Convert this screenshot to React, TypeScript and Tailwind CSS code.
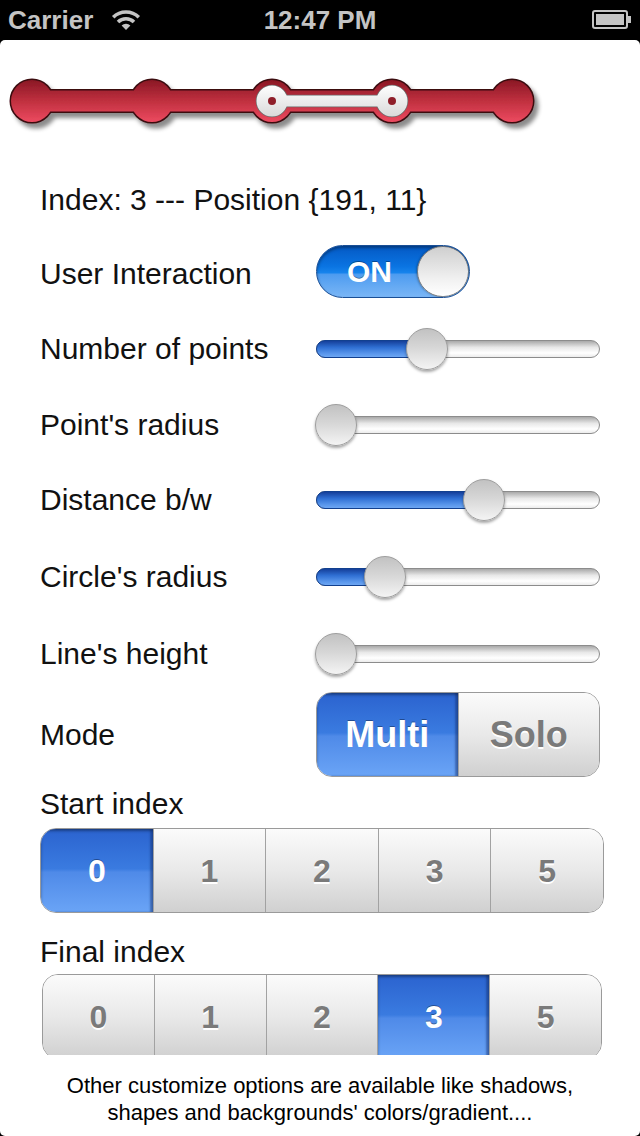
import React from 'react';

const sliders = [
  { label: 'Number of points', knob: 110, h: 'h-[77px]' },
  { label: "Point's radius", knob: 19, h: 'h-[75px]' },
  { label: 'Distance b/w', knob: 167, h: 'h-[76px]' },
  { label: "Circle's radius", knob: 68, h: 'h-[77px]' },
  { label: "Line's height", knob: 19, h: 'h-[77px]' },
];

const StatusBar = () => (
  <div className="relative h-[40px] bg-black flex items-center px-[8px] text-[#c4c4c4] text-[26px] font-bold">
    <span className="leading-none">Carrier</span>
    <svg className="ml-[18px] mt-[-2px]" width="30" height="23" viewBox="0 0 30 23">
      <path d="M2.2 9.2 A18.5 18.5 0 0 1 27.8 9.2" fill="none" stroke="#c4c4c4" strokeWidth="3.6" />
      <path d="M7 14 A11.5 11.5 0 0 1 23 14" fill="none" stroke="#c4c4c4" strokeWidth="3.6" />
      <path d="M15 22 L10.6 17.6 A6.2 6.2 0 0 1 19.4 17.6 Z" fill="#c4c4c4" />
    </svg>
    <span className="absolute left-0 right-0 text-center leading-none pointer-events-none">12:47 PM</span>
    <svg className="ml-auto mr-[0px]" width="40" height="20" viewBox="0 0 40 20">
      <rect x="1" y="1" width="34" height="17" rx="2" fill="none" stroke="#c4c4c4" strokeWidth="2" />
      <rect x="4" y="4" width="28" height="11" fill="#c4c4c4" />
      <rect x="36" y="6" width="3" height="7" fill="#c4c4c4" />
    </svg>
  </div>
);

const Stepper = () => {
  const xs = [32, 152, 272, 392, 512];
  const cy = 31;
  return (
    <svg width="560" height="70" viewBox="0 0 560 70">
      <defs>
        <linearGradient id="red" gradientUnits="userSpaceOnUse" x1="0" y1="10" x2="0" y2="52">
          <stop offset="0" stopColor="#8a1825" />
          <stop offset="0.5" stopColor="#c0303f" />
          <stop offset="1" stopColor="#ec4a60" />
        </linearGradient>
        <linearGradient id="white" gradientUnits="userSpaceOnUse" x1="0" y1="15" x2="0" y2="47">
          <stop offset="0" stopColor="#ffffff" />
          <stop offset="1" stopColor="#d9d9d9" />
        </linearGradient>
        <filter id="shadow" x="-5%" y="-30%" width="115%" height="170%">
          <feDropShadow dx="4" dy="5" stdDeviation="2.2" floodColor="#000" floodOpacity="0.45" />
        </filter>
      </defs>
      <g filter="url(#shadow)">
        <g stroke="#3a0a10" strokeWidth="3" fill="url(#red)">
          <rect x="32" y={cy - 10.5} width="480" height="21" />
          {xs.map((x) => (
            <circle key={x} cx={x} cy={cy} r="21" />
          ))}
        </g>
        <g fill="url(#red)">
          <rect x="32" y={cy - 10.5} width="480" height="21" />
          {xs.map((x) => (
            <circle key={x} cx={x} cy={cy} r="21" />
          ))}
        </g>
      </g>
      <g stroke="#6a6a6a" strokeWidth="1.5" fill="url(#white)">
        <rect x="272" y={cy - 5.5} width="120" height="11" />
        <circle cx="272" cy={cy} r="15.5" />
        <circle cx="392" cy={cy} r="15.5" />
      </g>
      <g fill="url(#white)">
        <rect x="272" y={cy - 5.5} width="120" height="11" />
        <circle cx="272" cy={cy} r="15.5" />
        <circle cx="392" cy={cy} r="15.5" />
      </g>
      <circle cx="272" cy={cy} r="4" fill="#8f1f2a" />
      <circle cx="392" cy={cy} r="4" fill="#8f1f2a" />
    </svg>
  );
};

const Toggle = () => (
  <div className="relative w-[154px] h-[53px] rounded-full border border-[#1a4f96] overflow-hidden bg-[linear-gradient(to_bottom,#0459c4_0%,#0a74e2_40%,#1683ec_52%,#4e9cf0_56%,#7ab6f6_100%)] shadow-[inset_0_2px_3px_rgba(0,0,0,0.35)]">
    <span className="absolute left-[30px] top-0 bottom-0 flex items-center text-white font-bold text-[30px] [text-shadow:0_-1px_0_rgba(0,0,0,0.35)]">
      ON
    </span>
    <div className="absolute right-0 top-0 w-[52px] h-[51px] rounded-full border border-[#7a7a7a] bg-[linear-gradient(to_bottom,#cfcfcf,#f3f3f3_70%,#ffffff)] shadow-[-1px_0_2px_rgba(0,0,0,0.25)]" />
  </div>
);

const Slider = ({ knob }: { knob: number }) => (
  <div className="relative w-[284px] h-[18px] rounded-full border border-[#8c8c8c] bg-[linear-gradient(to_bottom,#a9a9a9,#e8e8e8_40%,#ffffff_75%,#ececec)]">
    <div
      className="absolute left-[-1px] top-[-1px] bottom-[-1px] rounded-l-full border border-[#12408f] bg-[linear-gradient(to_bottom,#153f9a,#2f6fd3_40%,#5a97ec_80%,#6da6f2)]"
      style={{ width: knob + 2 }}
    />
    <div
      className="absolute top-[-13px] w-[42px] h-[42px] rounded-full border border-[#9d9d9d] bg-[linear-gradient(to_bottom,#c2c2c2,#d6d6d6_45%,#f4f4f4)] shadow-[0_2px_3px_rgba(0,0,0,0.35)]"
      style={{ left: knob - 21 }}
    />
  </div>
);

const Segmented = ({
  items,
  selected,
  className,
  text,
}: {
  items: string[];
  selected: number;
  className: string;
  text: string;
}) => (
  <div className={`flex overflow-hidden rounded-[16px] border border-[#9a9a9a] ${className}`}>
    {items.map((it, i) => (
      <div
        key={it}
        className={`flex-1 flex items-center justify-center font-bold ${text} ${
          i > 0 ? 'border-l border-[#a2a2a2]' : ''
        } ${
          i === selected
            ? 'text-white bg-[linear-gradient(to_bottom,#2b63cf_0%,#3a7be0_48%,#4f8ae8_52%,#6aa4f6_100%)] shadow-[inset_0_2px_3px_rgba(0,0,0,0.35),inset_-3px_0_2px_rgba(20,50,120,0.45)] [text-shadow:0_-1px_0_rgba(0,0,0,0.35)]'
            : 'text-[#7a7a7a] bg-[linear-gradient(to_bottom,#fbfbfb,#e9e9e9_50%,#d0d0d0)] [text-shadow:0_2px_0_#ffffff]'
        }`}
      >
        {it}
      </div>
    ))}
  </div>
);

export default function App() {
  return (
    <div className="w-[640px] h-[1136px] bg-black font-['Liberation_Sans',Arial,sans-serif] overflow-hidden">
      <StatusBar />
      <div className="h-[1096px] bg-white rounded-[5px] text-[#111]">
        <div className="h-[128px] pt-[30px]">
          <Stepper />
        </div>
        <div className="h-[64px] flex items-center pl-[40px] text-[30px] leading-[30px]">
          Index: 3 --- Position {'{191, 11}'}
        </div>

        <div className="h-[78px] flex items-center pl-[40px]">
          <span className="w-[276px] text-[30px] leading-[30px] pt-[6px]">User Interaction</span>
          <Toggle />
        </div>

        {sliders.map((s) => (
          <div key={s.label} className={`${s.h} flex items-center pl-[40px]`}>
            <span className="w-[276px] text-[30px] leading-[30px]">{s.label}</span>
            <Slider knob={s.knob} />
          </div>
        ))}

        <div className="h-[85px] flex items-center pl-[40px]">
          <span className="w-[276px] text-[30px] leading-[30px]">Mode</span>
          <Segmented items={['Multi', 'Solo']} selected={0} className="w-[284px] h-[85px]" text="text-[36px]" />
        </div>

        <div className="h-[51px] flex items-end pb-[9px] pl-[40px] text-[30px] leading-[30px]">Start index</div>
        <Segmented
          items={['0', '1', '2', '3', '5']}
          selected={0}
          className="ml-[40px] w-[564px] h-[85px]"
          text="text-[32px]"
        />

        <div className="h-[61px] flex items-end pb-[7px] pl-[40px] text-[30px] leading-[30px]">Final index</div>
        <div className="ml-[42px] w-[560px] h-[81px] overflow-hidden">
          <Segmented items={['0', '1', '2', '3', '5']} selected={3} className="w-[560px] h-[85px]" text="text-[32px]" />
        </div>

        <p className="mt-[17px] text-center text-[22px] leading-[27px] text-black">
          Other customize options are available like shadows,
          <br />
          shapes and backgrounds' colors/gradient....
        </p>
      </div>
    </div>
  );
}
